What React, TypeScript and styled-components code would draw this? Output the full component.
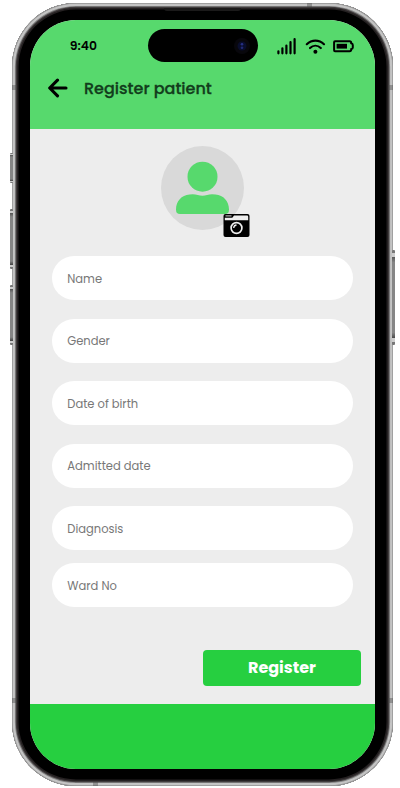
import React from "react";
import styled, { createGlobalStyle } from "styled-components";

const GlobalStyle = createGlobalStyle`
  * { box-sizing: border-box; }
  html, body { margin: 0; background: #fff; overflow: hidden; }
  body { font-family: Poppins, Inter, "Open Sans", sans-serif; }
`;

const Stage = styled.main`
  width: 400px;
  height: 788px;
  padding: 3px 0 0 12.4px;
  background: #fff;
`;

const Phone = styled.div`
  position: relative;
  width: 381px;
  height: 783px;
  padding: 16.5px 18.4px 17px 17.6px;
  border-radius: 64px;
  background: #000;
  box-shadow:
    inset 0 0 0 0.7px #929292,
    inset 0 0 0 2.9px #c4c4c4,
    inset 0 0 0 3.8px #858585,
    inset 0 0 0 5px #403c3d,
    inset 0 0 0 6.5px #252122;
`;

const SideKey = styled.span<{ $top: number; $height: number; $right?: boolean }>`
  position: absolute;
  top: ${(p) => p.$top}px;
  ${(p) => (p.$right ? "right: -1.6px;" : "left: -2px;")}
  width: 3px;
  height: ${(p) => p.$height}px;
  border-radius: 1px;
  background: linear-gradient(#777 0 3%, #ccc 3% 7%, #555 7%, #858585 13% 87%, #444 93%, #ccc 93% 97%, #777 97%);
`;

const Band = styled.span<{ $left?: number; $top: number; $w: number; $h: number }>`
  position: absolute;
  left: ${(p) => p.$left ?? 0}px;
  top: ${(p) => p.$top}px;
  width: ${(p) => p.$w}px;
  height: ${(p) => p.$h}px;
  background: rgba(70, 70, 70, 0.4);
`;

const Earpiece = styled.span`
  position: absolute;
  top: 5px;
  left: 152px;
  width: 77px;
  height: 3px;
  border-radius: 0 0 3px 3px;
  background: #1b1a1a;
`;

const Screen = styled.div`
  display: flex;
  flex-direction: column;
  width: 345px;
  height: 749.5px;
  border-radius: 46px;
  overflow: hidden;
  background: #ededed;
`;

const Header = styled.header`
  flex: 0 0 109.5px;
  background: #57d96d;
`;

const StatusBar = styled.div`
  display: grid;
  grid-template-columns: 117.7px 110px 1fr;
  height: 51.5px;
  padding-top: 9.5px;
`;

const Time = styled.time`
  padding: 9px 0 0 39.7px;
  font-size: 12.4px;
  line-height: 16px;
  font-weight: 600;
  color: #000;
`;

const Island = styled.div`
  display: flex;
  align-items: center;
  justify-content: flex-end;
  height: 33px;
  padding-right: 8px;
  border-radius: 17px;
  background: #000;
`;

const StatusIcons = styled.svg`
  margin: 7px 0 0 18px;
  width: 80px;
  height: 20px;
`;

const TitleRow = styled.div`
  display: flex;
  align-items: center;
  height: 34px;
  padding-left: 18px;
`;

const BackButton = styled.button`
  display: flex;
  width: 36px;
  padding: 0;
  border: 0;
  background: none;
`;

const Title = styled.h1`
  margin: 2px 0 0;
  font-size: 16px;
  line-height: 24px;
  font-weight: 500;
  color: #123d1c;
  -webkit-text-stroke: 0.3px #123d1c;
`;

const Content = styled.section`
  display: flex;
  flex-direction: column;
  flex: 0 0 575px;
  padding: 17px 14px 0 22.2px;
`;

const Avatar = styled.div`
  position: relative;
  width: 83px;
  height: 84px;
  margin-left: 109.2px;
  border-radius: 50%;
  background: #d9d9d9;
`;

const CameraButton = styled.button`
  position: absolute;
  left: 61.3px;
  top: 68px;
  display: flex;
  padding: 0;
  border: 0;
  background: none;
`;

const Form = styled.div`
  display: flex;
  flex-direction: column;
  width: 300.5px;
  margin-top: 26px;
`;

const Field = styled.label<{ $gap: number }>`
  display: flex;
  align-items: center;
  height: 44px;
  margin-bottom: ${(p) => p.$gap}px;
  padding: 1px 0 0 15.1px;
  border-radius: 22px;
  background: #fff;
`;

const FieldText = styled.span`
  font-size: 11.5px;
  line-height: 18px;
  color: #777;
`;

const RegisterButton = styled.button`
  align-self: flex-end;
  width: 158px;
  height: 36px;
  margin-top: 42.5px;
  padding: 0;
  border: 0;
  border-radius: 4px;
  background: #26cf40;
  color: #fff;
  font: 700 16px/36px Poppins, Inter, sans-serif;
`;

const Footer = styled.footer`
  flex: 1;
  background: #26cf40;
`;

const fields = [
  { label: "Name", gap: 18.7 },
  { label: "Gender", gap: 18.5 },
  { label: "Date of birth", gap: 18.6 },
  { label: "Admitted date", gap: 18.4 },
  { label: "Diagnosis", gap: 13.2 },
  { label: "Ward No", gap: 0 },
];

export default function App() {
  return (
    <>
      <GlobalStyle />
      <Stage>
        <Phone>
          <SideKey $top={150} $height={30} />
          <SideKey $top={206} $height={60} />
          <SideKey $top={282} $height={60} />
          <SideKey $top={247} $height={95} $right />
          <Band $top={82} $w={5} $h={5} />
          <Band $top={695} $w={5} $h={5} />
          <Band $left={376} $top={82} $w={5} $h={5} />
          <Band $left={376} $top={695} $w={5} $h={5} />
          <Band $left={295} $top={0} $w={5} $h={4} />
          <Band $left={81} $top={779} $w={5} $h={4} />
          <Earpiece />
          <Screen>
            <Header>
              <StatusBar>
                <Time>9:40</Time>
                <Island>
                  <svg width="16" height="16" viewBox="0 0 16 16" aria-hidden="true">
                    <circle cx="8" cy="8" r="8" fill="#08070c" />
                    <circle cx="8" cy="8" r="4.5" fill="#090d2c" />
                    <circle cx="8" cy="6.3" r="1.3" fill="#263085" />
                    <circle cx="8" cy="9.7" r="1.3" fill="#202a75" />
                  </svg>
                </Island>
                <StatusIcons viewBox="0 0 80 20" aria-hidden="true">
                  <path
                    d="M2.4 17.3v-2M6.4 17.3v-5M10.4 17.3V9.5M14.5 17.3V6M18.6 17.3V3"
                    fill="none" stroke="#000" strokeWidth="2.2" strokeLinecap="round"
                  />
                  <path
                    d="M30.8 8.2c5-4.8 12.2-4.8 17.2 0M34 12c3.2-3 7.6-3 10.8 0"
                    fill="none" stroke="#000" strokeWidth="2.2" strokeLinecap="round"
                  />
                  <circle cx="39.4" cy="15.7" r="2" />
                  <path
                    d="M59 6h14.6q1.6 0 1.6 1.6v.5q1.6.4 1.6 1.7v2.4q0 1.3-1.6 1.7v.5q0 1.6-1.6 1.6H59q-.9 0-.9-1V7q0-1 .9-1z"
                    transform="translate(0 -.8)" fill="none" stroke="#000" strokeWidth="2"
                  />
                  <rect x="60.6" y="7.8" width="10.4" height="4.8" />
                </StatusIcons>
              </StatusBar>
              <TitleRow>
                <BackButton aria-label="Back">
                  <svg width="20" height="20" viewBox="0 0 20 20">
                    <path d="M18 10H2.2M9.5 2.2 1.7 10l7.8 7.8" fill="none" stroke="#000" strokeWidth="3.1" strokeLinecap="round" strokeLinejoin="round" />
                  </svg>
                </BackButton>
                <Title>Register patient</Title>
              </TitleRow>
            </Header>
            <Content>
              <Avatar>
                <svg width="83" height="84" viewBox="0 0 83 84" aria-hidden="true">
                  <circle cx="41.5" cy="30.7" r="15" fill="#57d96d" />
                  <path
                    d="M28.5 48.5q4.5-.9 8.2.6 4.8 1.4 9.4 0 3.7-1.5 8.4-.6C62.5 49 68 55.5 68 63.5q0 4.6-4 4.6H19q-4 0-4-4.6C15 55.5 20.5 49 28.5 48.5z"
                    fill="#57d96d"
                  />
                </svg>
                <CameraButton aria-label="Add photo">
                  <svg width="27" height="23" viewBox="0 0 27 23">
                    <rect x=".5" y="0" width="26" height="23" rx="2" />
                    <path d="M1.8 3.7h7.5l1.7-2.2H24q1.2 0 1.2 1.2v3.5H1.800z" fill="#ededed" />
                    <path d="M2.5 1.9h6" stroke="#ededed" strokeWidth=".9" />
                    <circle cx="13.5" cy="14" r="5.4" fill="none" stroke="#ededed" strokeWidth="1.7" />
                    <path d="M10.7 14q.1-2.8 2.8-3" fill="none" stroke="#ededed" strokeWidth="1.3" />
                  </svg>
                </CameraButton>
              </Avatar>
              <Form>
                {fields.map((f) => (
                  <Field key={f.label} $gap={f.gap}>
                    <FieldText>{f.label}</FieldText>
                  </Field>
                ))}
              </Form>
              <RegisterButton>Register</RegisterButton>
            </Content>
            <Footer />
          </Screen>
        </Phone>
      </Stage>
    </>
  );
}
